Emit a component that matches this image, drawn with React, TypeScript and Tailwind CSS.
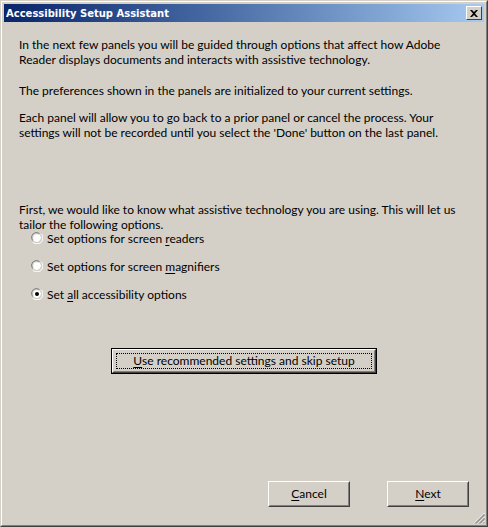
import React from 'react';

function U({ children }: { children: React.ReactNode }) {
  return <span className="underline underline-offset-[2px]">{children}</span>;
}

function Radio({ checked, children }: { checked?: boolean; children: React.ReactNode }) {
  return (
    <div className="flex items-center h-[14px]">
      <svg width="12" height="12" viewBox="0 0 12 12" className="mr-[4px] shrink-0">
        <path d="M1.5 8.5 A5 5 0 0 1 8.5 1.5" fill="none" stroke="#808080" strokeWidth="1" />
        <path d="M2.5 7.5 A4 4 0 0 1 7.5 2.5" fill="none" stroke="#404040" strokeWidth="1" />
        <circle cx="6" cy="6" r="4" fill="#fff" />
        <path d="M2.5 9.5 A5 5 0 0 0 9.5 2.5" fill="none" stroke="#d4d0c8" strokeWidth="1" />
        <path d="M1.8 10.2 A5.8 5.8 0 0 0 10.2 1.8" fill="none" stroke="#fff" strokeWidth="1" />
        {checked && <circle cx="6" cy="6" r="2" fill="#000" />}
      </svg>
      <span>{children}</span>
    </div>
  );
}

function Btn({ children, def }: { children: React.ReactNode; def?: boolean }) {
  return (
    <div
      className={
        def
          ? 'border border-black h-[26px] w-[266px] bg-[#d4d0c8]'
          : 'h-[26px] w-[82px] bg-[#d4d0c8]'
      }
    >
      <div className="h-full border border-t-white border-l-white border-r-[#404040] border-b-[#404040]">
        <div className="h-full border border-t-[#d4d0c8] border-l-[#d4d0c8] border-r-[#808080] border-b-[#808080] flex items-center justify-center">
          {def ? (
            <div className="border border-dotted border-black h-[16px] w-full mx-[2px] flex items-center justify-center pb-[1px]">
              {children}
            </div>
          ) : (
            <span className="pb-[1px]">{children}</span>
          )}
        </div>
      </div>
    </div>
  );
}

export default function App() {
  return (
    <div className="w-[488px] h-[527px] bg-[#d4d0c8] border border-t-[#d4d0c8] border-l-[#d4d0c8] border-r-[#404040] border-b-[#404040] text-[12px] text-black leading-[15px] font-['Lato',sans-serif]">
      <div className="h-full border border-t-white border-l-white border-r-[#808080] border-b-[#808080] p-[2px] flex flex-col relative">
        {/* title bar */}
        <div className="h-[18px] shrink-0 flex items-center justify-between pl-[2px] pr-[2px] bg-gradient-to-r from-[#0a246a] to-[#a6caf0]">
          <span className="text-white font-bold text-[10px] font-['DejaVu_Sans',sans-serif]">
            Accessibility Setup Assistant
          </span>
          <div className="w-[16px] h-[14px] bg-[#d4d0c8] border border-t-white border-l-white border-r-[#404040] border-b-[#404040] flex items-center justify-center">
            <svg width="8" height="7" viewBox="0 0 8 7">
              <path d="M0 0 L2 0 L4 2 L6 0 L8 0 L5 3.5 L8 7 L6 7 L4 5 L2 7 L0 7 L3 3.5 Z" fill="#000" />
            </svg>
          </div>
        </div>

        <div className="flex flex-col pl-[15px] pr-[8px] pt-[15px] flex-1">
          <p>
            In the next few panels you will be guided through options that affect how Adobe
            <br />
            Reader displays documents and interacts with assistive technology.
          </p>
          <p className="mt-[16px]">The preferences shown in the panels are initialized to your current settings.</p>
          <p className="mt-[12px]">
            Each panel will allow you to go back to a prior panel or cancel the process. Your
            <br />
            settings will not be recorded until you select the 'Done' button on the last panel.
          </p>
          <p className="mt-[62px]">
            First, we would like to know what assistive technology you are using. This will let us
            <br />
            tailor the following options.
          </p>
          <div className="flex flex-col gap-[14px] pl-[12px] -mt-[1px]">
            <Radio>
              Set options for screen <U>r</U>eaders
            </Radio>
            <Radio>
              Set options for screen <U>m</U>agnifiers
            </Radio>
            <Radio checked>
              Set <U>a</U>ll accessibility options
            </Radio>
          </div>
          <div className="flex pl-[92px] mt-[47px]">
            <Btn def>
              <U>U</U>se recommended settings and skip setup
            </Btn>
          </div>
          <div className="flex-1" />
          <div className="flex justify-end gap-[37px] pr-[7px] mb-[16px]">
            <Btn>
              <U>C</U>ancel
            </Btn>
            <Btn>
              <U>N</U>ext
            </Btn>
          </div>
        </div>

        {/* size grip */}
        <svg width="12" height="12" viewBox="0 0 12 12" className="absolute right-[1px] bottom-[1px]">
          <path d="M11.5 1 L1 11.5 M11.5 5 L5 11.5 M11.5 9 L9 11.5" stroke="#fff" strokeWidth="1" />
          <path d="M11.5 2 L2 11.5 M11.5 6 L6 11.5 M11.5 10 L10 11.5" stroke="#808080" strokeWidth="1" />
          <path d="M11.5 3 L3 11.5 M11.5 7 L7 11.5" stroke="#808080" strokeWidth="1" />
        </svg>
      </div>
    </div>
  );
}
